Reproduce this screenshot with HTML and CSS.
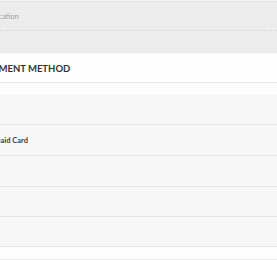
FILE: index.html
```html
<!DOCTYPE html>
<html>
<head>
<meta charset="utf-8">
<link rel="stylesheet" href="styles.css">
</head>
<body>
<div class="top-edge"></div>
<div class="header">
  <div class="header-row crumb"><span class="crumb-text">Verification</span></div>
  <div class="header-row blank"></div>
</div>
<div class="section-title"><span class="title-text">PAYMENT METHOD</span></div>
<div class="spacer"></div>
<ul class="methods">
  <li class="method"></li>
  <li class="method"><span class="method-name">Prepaid Card</span></li>
  <li class="method"></li>
  <li class="method"></li>
  <li class="method"></li>
</ul>
<div class="bottom-space"></div>
<div class="footer"></div>
</body>
</html>
```
FILE: styles.css
```css
html, body {
  margin: 0;
  padding: 0;
  background: #ffffff;
  font-family: Lato, "Open Sans", sans-serif;
  overflow: hidden;
}
.top-edge {
  height: 2px;
  background: #f3f3f3;
  border-bottom: 1px solid #e2e2e2;
  box-sizing: border-box;
}
.header {
  background: #ececec;
}
.header-row {
  display: flex;
  align-items: center;
}
.crumb {
  height: 29px;
  border-bottom: 1px dashed #dcdcdc;
  box-sizing: border-box;
}
.crumb-text {
  font-size: 7.5px;
  color: #a39d96;
  margin-left: -19px;
  padding-top: 1px;
}
.blank {
  height: 23px;
  border-bottom: 1px solid #f6f6f6;
  box-sizing: border-box;
}
.section-title {
  height: 29px;
  display: flex;
  align-items: center;
  border-bottom: 1px solid #e6e6e6;
  box-sizing: border-box;
  background: #fefefe;
}
.title-text {
  font-size: 9.5px;
  font-weight: 700;
  color: #333;
  margin-left: -19px;
  padding-top: 1px;
}
.spacer {
  height: 12px;
  background: #fdfdfd;
}
.methods {
  list-style: none;
  margin: 0;
  padding: 0;
}
.method {
  height: 30px;
  background: #f7f7f7;
  border-bottom: 1px solid #e6e6e6;
  box-sizing: border-box;
  display: flex;
  align-items: center;
}
.method:nth-child(2), .method:nth-child(3) {
  height: 31px;
}
.method-name {
  font-size: 7.5px;
  font-weight: 700;
  color: #3a3d4c;
  margin-left: -15px;
}
.bottom-space {
  height: 12px;
  background: #fdfdfd;
}
.footer {
  height: 10px;
  background: #ececec;
}
```
